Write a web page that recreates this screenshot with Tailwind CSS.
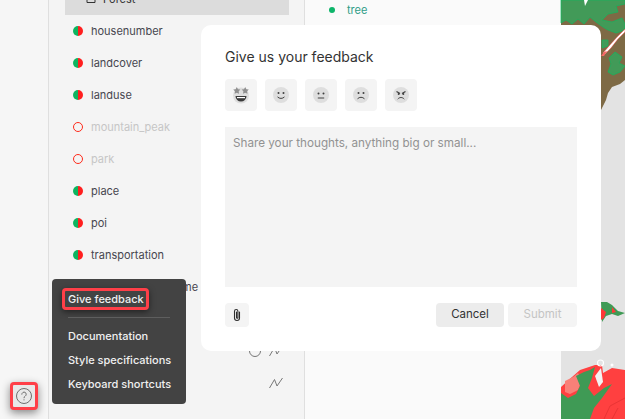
<!DOCTYPE html>
<html lang="en">
<head>
  <meta charset="UTF-8" />
  <title>Give us your feedback</title>
  <script src="https://cdn.jsdelivr.net/npm/@tailwindcss/browser@4"></script>
</head>
<body class="bg-[#f5f5f5] font-['Inter',sans-serif] overflow-hidden">
  <div class="relative flex w-[625px] h-[419px] overflow-hidden">

    <!-- Left rail -->
    <div class="w-[49px] shrink-0 h-full border-r border-[#dfdfdf] bg-[#f6f6f6] flex flex-col items-center justify-end pb-[9px]">
      <button class="w-[28px] h-[28px] flex items-center justify-center rounded-[4px] border-[3px] border-[#ff3f48] bg-[#e8e8e8] shadow-[0_3px_8px_rgba(0,0,0,0.45)]">
        <svg width="18" height="18" viewBox="0 0 18 18" fill="none" stroke="#6f6f6f" stroke-width="1">
          <circle cx="9" cy="9" r="7.500" />
          <path d="M6.800 7.200a2.200 2.200 0 1 1 3.400 1.900c-.8.500-1.200.9-1.200 1.700" stroke-linecap="round" />
          <circle cx="9" cy="12.800" r=".6" fill="#6f6f6f" stroke="none" />
        </svg>
      </button>
    </div>

    <!-- Layers panel -->
    <div class="w-[256px] shrink-0 h-full border-r border-[#dfdfdf] bg-[#f4f4f4] pl-4 pr-[15px] text-[11px] leading-4 text-[#46464f]">
      <div class="-mt-[17px] h-8 bg-[#dcdcdc] flex items-center pl-5 gap-[6px] text-[#333]">
        <svg width="12" height="12" viewBox="0 0 12 12" fill="none" stroke="#333" stroke-width="1"><path d="M2 1v8.500h8V5L7 1z" /></svg>
        <span>Forest</span>
      </div>
      <div class="h-8 flex items-center pl-2 gap-2"><span class="size-[10px] rounded-full bg-[linear-gradient(90deg,#0db560_50%,#ff1f1f_50%)]"></span>housenumber</div>
      <div class="h-8 flex items-center pl-2 gap-2"><span class="size-[10px] rounded-full bg-[linear-gradient(90deg,#0db560_50%,#ff1f1f_50%)]"></span>landcover</div>
      <div class="h-8 flex items-center pl-2 gap-2"><span class="size-[10px] rounded-full bg-[linear-gradient(90deg,#0db560_50%,#ff1f1f_50%)]"></span>landuse</div>
      <div class="h-8 flex items-center pl-2 gap-2 text-[#c6c6c6]"><span class="size-[10px] rounded-full border border-[#ff2a1a]"></span>mountain_peak</div>
      <div class="h-8 flex items-center pl-2 gap-2 text-[#c6c6c6]"><span class="size-[10px] rounded-full border border-[#ff2a1a]"></span>park</div>
      <div class="h-8 flex items-center pl-2 gap-2"><span class="size-[10px] rounded-full bg-[linear-gradient(90deg,#0db560_50%,#ff1f1f_50%)]"></span>place</div>
      <div class="h-8 flex items-center pl-2 gap-2"><span class="size-[10px] rounded-full bg-[linear-gradient(90deg,#0db560_50%,#ff1f1f_50%)]"></span>poi</div>
      <div class="h-8 flex items-center pl-2 gap-2"><span class="size-[10px] rounded-full bg-[linear-gradient(90deg,#0db560_50%,#ff1f1f_50%)]"></span>transportation</div>
      <div class="h-8 flex items-center pl-2 gap-2"><span class="size-[10px] rounded-full bg-[linear-gradient(90deg,#0db560_50%,#ff1f1f_50%)]"></span>transportation_name</div>
      <div class="h-8"></div>
      <div class="h-8 flex items-center justify-end gap-[6px] pr-[5px]">
        <svg width="14" height="14" viewBox="0 0 14 14" fill="none" stroke="#777"><circle cx="7" cy="7" r="5.500" /></svg>
        <svg width="16" height="14" viewBox="0 0 16 14" fill="none" stroke="#777"><path d="M1.500 12 6.500 3.500 9 10 14.500 2" /></svg>
      </div>
      <div class="h-8 flex items-center justify-end pr-[5px]">
        <svg width="16" height="14" viewBox="0 0 16 14" fill="none" stroke="#777"><path d="M1.500 12 6.500 3.500 9 10 14.500 2" /></svg>
      </div>
    </div>

    <!-- Paint panel -->
    <div class="w-[255px] shrink-0 h-full bg-[#fafafa] pl-6 text-[11px]">
      <div class="h-5 flex items-center gap-3 text-[#2f9d87]">
        <span class="size-[6px] rounded-full bg-[#0db56a]"></span>tree
      </div>
    </div>

    <!-- Map -->
    <svg class="flex-1 h-full" viewBox="560 0 65 419" preserveAspectRatio="none">
      <rect x="560" y="0" width="65" height="419" fill="#e3e3e3" />
      <rect x="560" y="0" width="1" height="419" fill="#fafafa" />
      <path d="M561 0H625V80L620 84 612 87 608 93 606 100 601 110H561Z" fill="#7e6a45" />
      <path d="M561 0H625V4L616 6 618 12 608 14 602 20 612 22 622 18 625 24V30L616 33 608 30 603 27 596 22 590 17 584 24 578 19 572 24 566 20 561 23Z" fill="#429a58" stroke="#10b860" stroke-width=".7" />
      <path d="M602 40 608 40 608 46 602 48ZM609 58 615 52 622 57 619 63 625 66 620 72 613 75 608 72 611 64Z" fill="#429a58" stroke="#10b860" stroke-width=".7" />
      <path d="M603 53 609 46 617 37 625 29V32L618 39 611 48 605 54Z" fill="#fff" stroke="#ff2020" stroke-width=".4" />
      <path d="M601 56 604 52 607 51 604 56Z" fill="#f46a6a" />
      <path d="M584 0 588 0 585 6Z" fill="#fff" />
      <path d="M601 302 607 302 612 305 618 311 625 313 618 316 612 314 606 316 602 322Z" fill="#3f9a55" />
      <path d="M601 308 606 312 604 318 601 320ZM612 307 616 312 612 313Z" fill="#ff3636" />
      <path d="M561 387 572 377 580 370 595 365 602 365 603 373 612 368 625 370V419H561Z" fill="#ff4040" />
      <path d="M565 381 573 377 578 373 582 380 578 390 570 394 565 392Z" fill="#f98078" />
      <path d="M561 393 568 398 576 394 580 386 576 376 584 372 590 370 595 367 592 378 588 388 594 396 604 388 612 384 602 398 594 408 590 419H561Z" fill="#3f9a55" />
      <path d="M595 376 601 368 603 382 599 387Z" fill="#f3f3f3" />
      <circle cx="600.500" cy="363" r="3" fill="none" stroke="#fff" stroke-width="1.200" />
      <circle cx="612" cy="365" r="1.500" fill="#fff" />
      <path d="M604 419 610 406 625 398M612 419 618 408" fill="none" stroke="#e03030" stroke-width=".7" />
    </svg>

    <!-- Help menu -->
    <div class="absolute left-[52px] top-[279px] w-[134px] h-[125px] rounded-[4px] bg-[#434343] px-4 text-[11px] font-medium leading-4 text-[#f0f0f0]">
      <div class="mt-[9px] -ml-[6px] h-[22px] w-[87px] pl-[3px] flex items-center rounded-[4px] border-[3px] border-[#ff3f48] shadow-[0_2px_6px_rgba(0,0,0,0.5)] whitespace-nowrap">Give feedback</div>
      <div class="mt-[7px] h-px w-[102px] bg-[#5e5e5e]"></div>
      <div class="mt-[10px] whitespace-nowrap">Documentation</div>
      <div class="mt-2 whitespace-nowrap">Style specifications</div>
      <div class="mt-2 whitespace-nowrap">Keyboard shortcuts</div>
    </div>

    <!-- Feedback modal -->
    <div class="absolute left-[201px] top-[25px] w-[400px] h-[326px] rounded-[10px] bg-white p-6 flex flex-col">
      <h2 class="text-[14px] leading-[14px] text-[#333] mt-[1px]">Give us your feedback</h2>
      <div class="mt-[15px] flex gap-2">
        <button class="size-8 rounded bg-[#f4f4f4] flex items-center justify-center">
          <svg width="18" height="18" viewBox="0 0 18 18">
            <circle cx="9" cy="9.500" r="8" fill="#dedede" />
            <path d="M3.500 10h11a5.500 5.500 0 0 1-11 0Z" fill="#3a3a3a" />
            <path d="M5 11h8v1.200H5Z" fill="#fff" />
            <path d="M4.800 1 6 3.200l2.400.4L6.700 5.300 7 7.800 4.800 6.700 2.600 7.800 3 5.300 1.200 3.600l2.400-.4ZM13.200 1l1.200 2.200 2.400.4-1.700 1.700.4 2.500-2.300-1.100L11 7.800l.4-2.500-1.800-1.700 2.400-.4Z" fill="#8f8f8f" />
          </svg>
        </button>
        <button class="size-8 rounded bg-[#f4f4f4] flex items-center justify-center">
          <svg width="16" height="16" viewBox="0 0 16 16" fill="none" stroke="#3f3f3f">
            <circle cx="8" cy="8" r="8" fill="#dedede" stroke="none" />
            <circle cx="5.500" cy="6" r="1" fill="#3f3f3f" stroke="none" />
            <circle cx="10.500" cy="6" r="1" fill="#3f3f3f" stroke="none" />
            <path d="M4.800 10.200c1.600 1.700 4.800 1.700 6.400 0" stroke-linecap="round" />
          </svg>
        </button>
        <button class="size-8 rounded bg-[#f4f4f4] flex items-center justify-center">
          <svg width="16" height="16" viewBox="0 0 16 16" fill="none" stroke="#5a5a5a">
            <circle cx="8" cy="8" r="8" fill="#dedede" stroke="none" />
            <circle cx="5.500" cy="6.500" r="1" fill="#3f3f3f" stroke="none" />
            <circle cx="10.500" cy="6.500" r="1" fill="#3f3f3f" stroke="none" />
            <path d="M4.800 10.500h6.400M4.800 11.500h6.400" stroke-width=".6" />
          </svg>
        </button>
        <button class="size-8 rounded bg-[#f4f4f4] flex items-center justify-center">
          <svg width="16" height="16" viewBox="0 0 16 16" fill="none" stroke="#3f3f3f">
            <circle cx="8" cy="8" r="8" fill="#dedede" stroke="none" />
            <circle cx="5.500" cy="6" r="1" fill="#3f3f3f" stroke="none" />
            <circle cx="10.500" cy="6" r="1" fill="#3f3f3f" stroke="none" />
            <path d="M4.800 11.500c1.600-1.700 4.800-1.700 6.400 0" stroke-linecap="round" />
          </svg>
        </button>
        <button class="size-8 rounded bg-[#f4f4f4] flex items-center justify-center">
          <svg width="16" height="16" viewBox="0 0 16 16" fill="none" stroke="#3f3f3f">
            <circle cx="8" cy="8" r="8" fill="#dedede" stroke="none" />
            <path d="M3.500 4.500 7 6.500M12.500 4.500 9 6.500" stroke-width="1.300" />
            <circle cx="5.700" cy="7" r="1" fill="#3f3f3f" stroke="none" />
            <circle cx="10.300" cy="7" r="1" fill="#3f3f3f" stroke="none" />
            <path d="M5 11.800c1.500-1.800 4.500-1.800 6 0" stroke-linecap="round" />
          </svg>
        </button>
      </div>
      <div class="mt-4 h-40 bg-[#f4f4f4] px-2 py-[8px] text-[11.700px] leading-4 text-[#929292]">Share your thoughts, anything big or small...</div>
      <div class="mt-4 flex items-center gap-1 text-[11.500px]">
        <button class="size-6 rounded bg-[#f4f4f4] flex items-center justify-center mr-auto">
          <svg width="14" height="14" viewBox="0 0 14 14" fill="none" stroke="#2f2f2f" stroke-width="1.100" stroke-linecap="round">
            <path d="M9.500 4v6a2.500 2.500 0 0 1-5 0V3.200a1.700 1.700 0 0 1 3.400 0V9.500a.7.700 0 0 1-1.400 0V4" />
          </svg>
        </button>
        <button class="w-[68px] h-6 rounded bg-[#ececec] text-[#333]">Cancel</button>
        <button class="w-[69px] h-6 rounded bg-[#f4f4f4] text-[#c4c4c4]">Submit</button>
      </div>
    </div>
  </div>
</body>
</html>
